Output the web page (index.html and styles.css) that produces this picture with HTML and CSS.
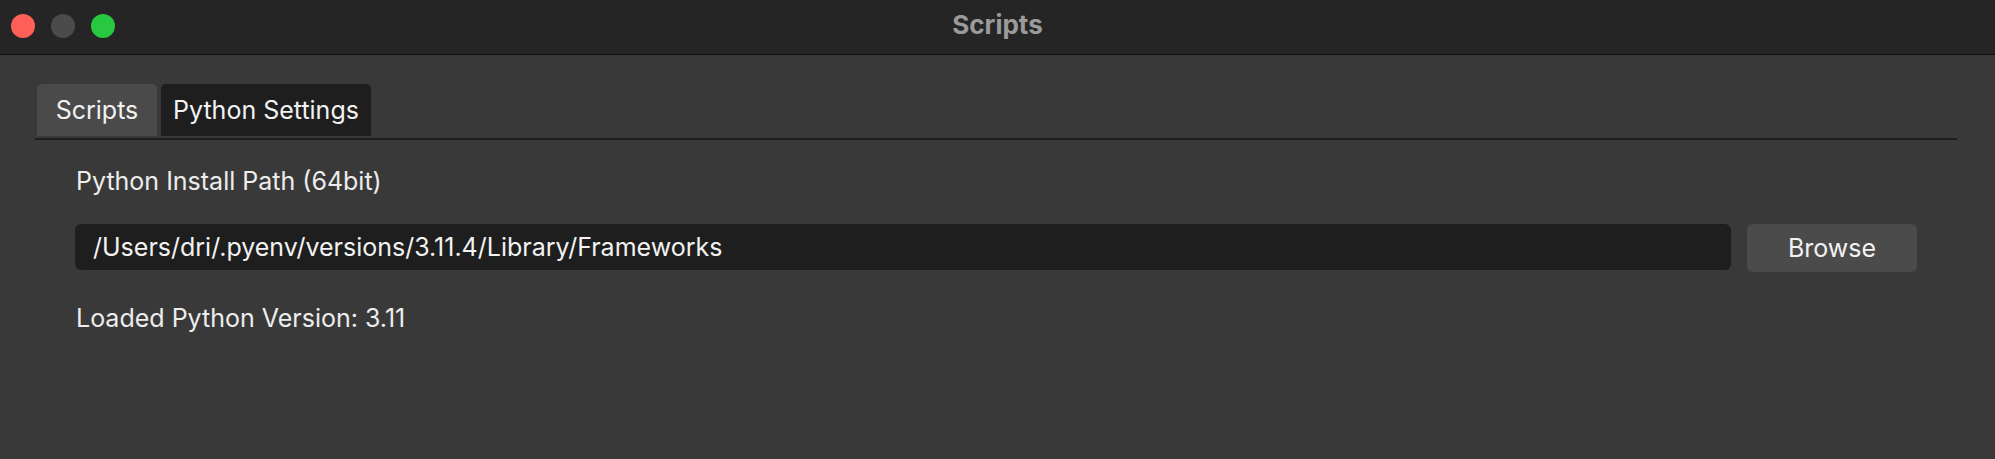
FILE: index.html
```html
<!DOCTYPE html>
<html>
<head>
<meta charset="utf-8">
<link rel="stylesheet" href="styles.css">
</head>
<body>
<div class="window">
  <header class="titlebar">
    <div class="lights">
      <span class="light red"></span>
      <span class="light gray"></span>
      <span class="light green"></span>
    </div>
    <div class="title">Scripts</div>
  </header>
  <main class="content">
    <nav class="tabs">
      <div class="tab tab-scripts">Scripts</div>
      <div class="tab tab-python active">Python Settings</div>
    </nav>
    <section class="panel">
      <div class="label">Python Install Path (64bit)</div>
      <div class="path-row">
        <div class="path-field">/Users/dri/.pyenv/versions/3.11.4/Library/Frameworks</div>
        <div class="browse">Browse</div>
      </div>
      <div class="label version">Loaded Python Version: 3.11</div>
    </section>
  </main>
</div>
</body>
</html>
```

FILE: styles.css
```css
* { box-sizing: border-box; }
html, body {
  margin: 0;
  padding: 0;
  width: 1995px;
  height: 459px;
  background: #393939;
  overflow: hidden;
  font-family: "Inter", "Noto Sans", sans-serif;
}
.window {
  width: 1995px;
  height: 459px;
  display: flex;
  flex-direction: column;
  background: #393939;
}
.titlebar {
  position: relative;
  height: 55px;
  flex: none;
  background: #252525;
  border-bottom: 1px solid #0f0f0f;
  display: flex;
  align-items: flex-start;
  justify-content: center;
}
.lights {
  position: absolute;
  left: 11px;
  top: 14px;
  display: flex;
  gap: 16px;
}
.light {
  width: 24px;
  height: 24px;
  border-radius: 50%;
}
.red { background: #fe5f57; }
.gray { background: #4b4b4b; }
.green { background: #28c840; }
.title {
  margin-top: 9px;
  font-size: 26px;
  line-height: 32px;
  font-weight: 700;
  color: #9b9b9b;
}
.content {
  flex: 1;
  padding: 29px 38px 0 35px;
}
.tabs {
  display: flex;
  gap: 4px;
  padding-left: 2px;
  border-bottom: 2px solid #1f1f1f;
  padding-bottom: 2px;
}
.tab {
  height: 52px;
  display: flex;
  align-items: center;
  justify-content: center;
  font-size: 25px;
  color: #f2f2f2;
  border-radius: 5px 5px 0 0;
}
.tab-scripts { width: 120px; background: #4a4a4a; }
.tab-python { width: 210px; background: #1e1e1e; }
.panel {
  padding: 25px 40px 0 40px;
  display: flex;
  flex-direction: column;
}
.label {
  font-size: 25px;
  line-height: 32px;
  color: #ededed;
  padding-left: 1px;
}
.path-row {
  display: flex;
  align-items: flex-start;
  gap: 16px;
  margin-top: 27px;
}
.path-field {
  flex: 1;
  height: 46px;
  background: #1e1e1e;
  border-radius: 6px;
  padding-left: 18px;
  display: flex;
  align-items: center;
  font-size: 25px;
  color: #f2f2f2;
}
.browse {
  width: 170px;
  height: 48px;
  background: #4b4b4b;
  border-radius: 6px;
  display: flex;
  align-items: center;
  justify-content: center;
  font-size: 25px;
  color: #f2f2f2;
}
.version {
  margin-top: 30px;
}
```
